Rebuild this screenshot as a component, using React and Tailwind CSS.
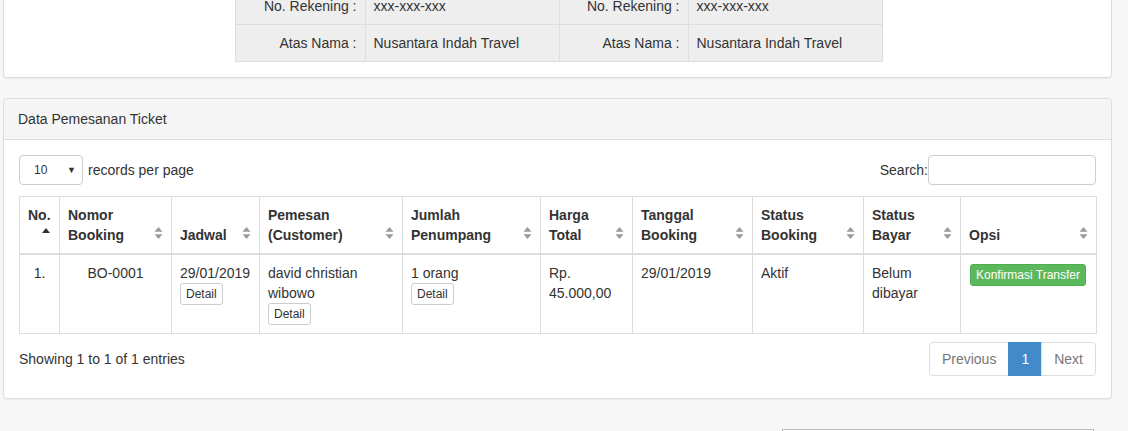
import React from 'react';

// Ikon sort (dua segitiga) ala DataTables
const SortIcon = () => (
  <svg width="9" height="12" viewBox="0 0 9 12" className="absolute right-[8px] bottom-[14px]">
    <path d="M4.5 0 L8.5 4.8 H0.5 Z" fill="#9a9a9a" />
    <path d="M0.5 7.2 H8.5 L4.5 12 Z" fill="#9a9a9a" />
  </svg>
);

const SortAscIcon = () => (
  <svg width="8" height="5" viewBox="0 0 8 5" className="absolute right-[9px] bottom-[20px]">
    <path d="M4 0 L8 5 H0 Z" fill="#333" />
  </svg>
);

const DetailButton = () => (
  <button className="block px-[5px] py-[1px] text-[12px] leading-[18px] border border-[#ccc] rounded-[3px] bg-white text-[#333]">
    Detail
  </button>
);

const columns = [
  { label: ['No.', '\u00a0'], w: 'w-[40px]', asc: true },
  { label: ['Nomor', 'Booking'], w: 'w-[112px]' },
  { label: ['Jadwal'], w: 'w-[88px]' },
  { label: ['Pemesan', '(Customer)'], w: 'w-[143px]' },
  { label: ['Jumlah', 'Penumpang'], w: 'w-[138px]' },
  { label: ['Harga', 'Total'], w: 'w-[92px]' },
  { label: ['Tanggal', 'Booking'], w: 'w-[120px]' },
  { label: ['Status', 'Booking'], w: 'w-[111px]' },
  { label: ['Status', 'Bayar'], w: 'w-[97px]' },
  { label: ['Opsi'], w: 'w-[136px]' },
];

const td = 'border border-[#ddd] p-[8px] align-top';

function App() {
  return (
    <div
      className="min-h-[431px] bg-[#f7f7f7] pl-[3px] pr-[16px] text-[14px] leading-[20px] text-[#333]"
      style={{ fontFamily: '"Liberation Sans", Arial, sans-serif' }}
    >
      <div className="-mt-[29px]">
        {/* Panel info rekening */}
        <div className="bg-white border border-[#ddd] rounded-[4px] shadow-[0_1px_1px_rgba(0,0,0,0.05)] p-[15px] flex justify-center">
          <table className="border-collapse bg-[#eee] table-fixed w-[647px] ml-[2px]">
            <tbody>
              {[0, 1].map((i) => (
                <tr key={i}>
                  <td className="border border-[#ddd] px-[8px] py-[8px] text-right w-[130px]">
                    {i === 0 ? 'No. Rekening :' : 'Atas Nama :'}
                  </td>
                  <td className="border border-[#ddd] px-[8px] py-[8px] w-[194px]">
                    {i === 0 ? 'xxx-xxx-xxx' : 'Nusantara Indah Travel'}
                  </td>
                  <td className="border border-[#ddd] px-[8px] py-[8px] text-right w-[129px]">
                    {i === 0 ? 'No. Rekening :' : 'Atas Nama :'}
                  </td>
                  <td className="border border-[#ddd] px-[8px] py-[8px] w-[194px]">
                    {i === 0 ? 'xxx-xxx-xxx' : 'Nusantara Indah Travel'}
                  </td>
                </tr>
              ))}
            </tbody>
          </table>
        </div>

        {/* Panel data pemesanan */}
        <div className="mt-[20px] bg-white border border-[#ddd] rounded-[4px] shadow-[0_1px_1px_rgba(0,0,0,0.05)]">
          <div className="bg-[#f5f5f5] border-b border-[#ddd] rounded-t-[4px] px-[14px] py-[10px] h-[41px]">
            Data Pemesanan Ticket
          </div>
          <div className="p-[15px] pb-[22px]">
            <div className="flex items-center justify-between">
              <div className="flex items-center gap-[5px]">
                <div className="w-[64px] h-[30px] border border-[#ccc] rounded-[4px] flex items-center justify-between pl-[14px] pr-[6px] text-[12px]">
                  <span>10</span>
                  <span className="text-[9px]">▼</span>
                </div>
                <span>records per page</span>
              </div>
              <div className="flex items-center">
                <span>Search:</span>
                <div className="w-[168px] h-[30px] border border-[#ccc] rounded-[4px]" />
              </div>
            </div>

            <table className="mt-[11px] w-full table-fixed border-collapse">
              <thead>
                <tr>
                  {columns.map((c, i) => (
                    <th
                      key={i}
                      className={`${c.w} relative border border-[#ddd] border-b-2 pl-[8px] pr-[30px] py-[8px] align-bottom text-left font-bold whitespace-nowrap overflow-visible`}
                    >
                      {c.label.map((l, j) => (
                        <div key={j}>{l}</div>
                      ))}
                      {c.asc ? <SortAscIcon /> : <SortIcon />}
                    </th>
                  ))}
                </tr>
              </thead>
              <tbody>
                <tr>
                  <td className={`${td} text-center`}>1.</td>
                  <td className={`${td} text-center`}>BO-0001</td>
                  <td className={td}>
                    29/01/2019
                    <DetailButton />
                  </td>
                  <td className={td}>
                    david christian
                    <br />
                    wibowo
                    <DetailButton />
                  </td>
                  <td className={td}>
                    1 orang
                    <DetailButton />
                  </td>
                  <td className={td}>
                    Rp.
                    <br />
                    45.000,00
                  </td>
                  <td className={td}>29/01/2019</td>
                  <td className={td}>Aktif</td>
                  <td className={td}>
                    Belum
                    <br />
                    dibayar
                  </td>
                  <td className={`${td} px-[9px]`}>
                    <button className="mt-[1px] px-[5px] py-[1px] text-[12px] leading-[18px] bg-[#5cb85c] border border-[#4cae4c] rounded-[3px] text-white whitespace-nowrap">
                      Konfirmasi Transfer
                    </button>
                  </td>
                </tr>
              </tbody>
            </table>

            <div className="flex items-center justify-between mt-[8px]">
              <div>Showing 1 to 1 of 1 entries</div>
              <div className="flex rounded-[4px]">
                <span className="px-[12px] py-[6px] border border-[#ddd] rounded-l-[4px] text-[#777]">Previous</span>
                <span className="px-[12px] py-[6px] border border-[#428bca] bg-[#428bca] text-white -ml-px">1</span>
                <span className="px-[12px] py-[6px] border border-[#ddd] rounded-r-[4px] text-[#777] -ml-px">Next</span>
              </div>
            </div>
          </div>
        </div>

        <div className="flex justify-end pr-[18px] mt-[30px]">
          <div className="w-[312px] h-[20px] border border-[#bbb] bg-white" />
        </div>
      </div>
    </div>
  );
}

export default App;
